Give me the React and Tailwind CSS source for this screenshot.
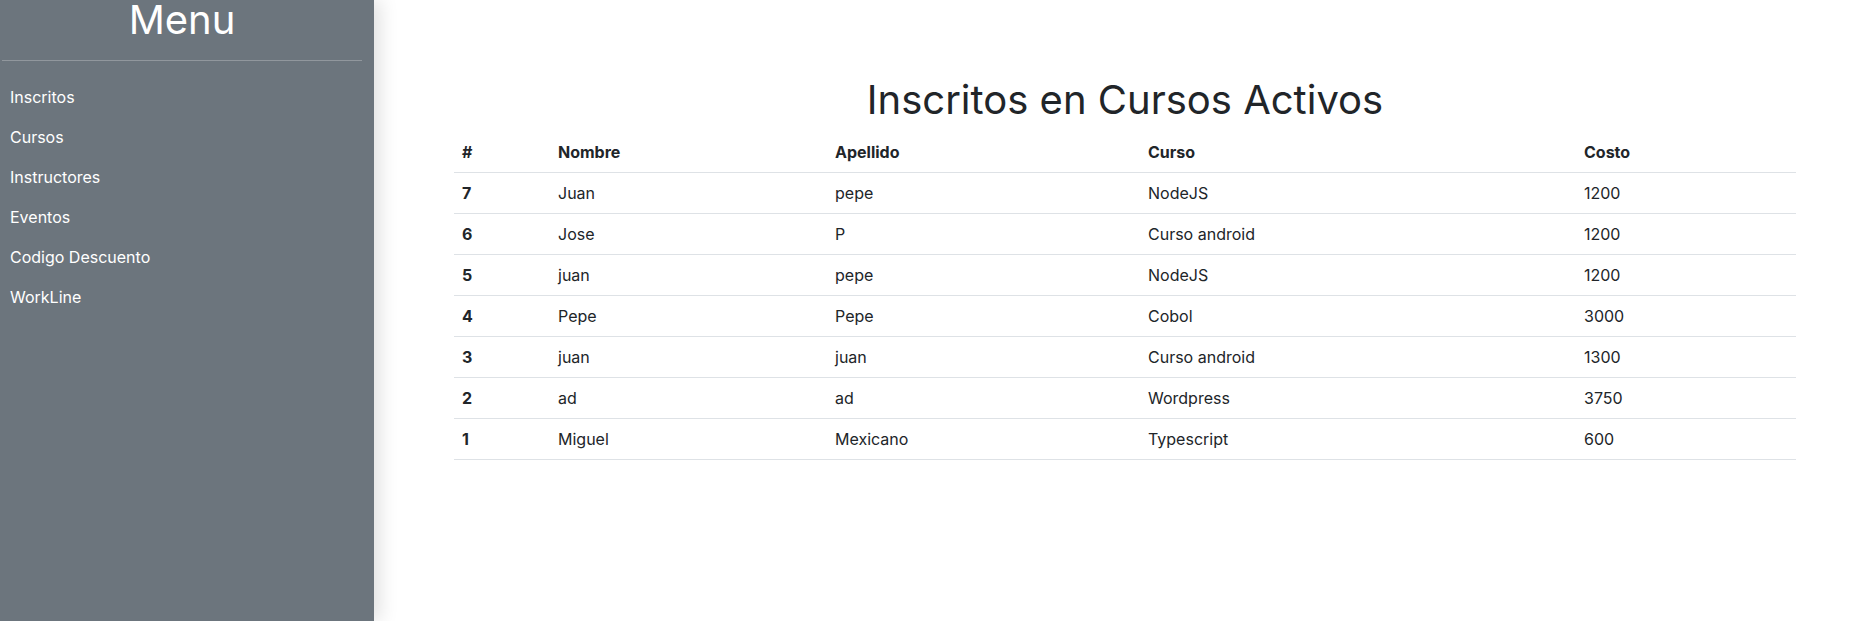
import React from 'react';

const inscritos = [
  { id: 7, nombre: 'Juan', apellido: 'pepe', curso: 'NodeJS', costo: 1200 },
  { id: 6, nombre: 'Jose', apellido: 'P', curso: 'Curso android', costo: 1200 },
  { id: 5, nombre: 'juan', apellido: 'pepe', curso: 'NodeJS', costo: 1200 },
  { id: 4, nombre: 'Pepe', apellido: 'Pepe', curso: 'Cobol', costo: 3000 },
  { id: 3, nombre: 'juan', apellido: 'juan', curso: 'Curso android', costo: 1300 },
  { id: 2, nombre: 'ad', apellido: 'ad', curso: 'Wordpress', costo: 3750 },
  { id: 1, nombre: 'Miguel', apellido: 'Mexicano', curso: 'Typescript', costo: 600 },
];

const links = ['Inscritos', 'Cursos', 'Instructores', 'Eventos', 'Codigo Descuento', 'WorkLine'];

const App = () => {
  return (
    <div className="flex h-[621px] bg-white font-['Inter',sans-serif] text-[#212529]">
      {/* Sidebar */}
      <aside className="relative z-10 w-[374px] shrink-0 bg-[#6c757d] text-white shadow-[6px_0_18px_rgba(0,0,0,0.12)]">
        <div className="ml-[2px] w-[360px]">
          <h1 className="text-center text-[40px] leading-none font-normal">Menu</h1>
          <div className="mt-[20px] h-px bg-white/25" />
        </div>
        <nav className="mt-4 flex flex-col">
          {links.map(l => (
            <a key={l} href="#" className="px-[10px] py-2 text-base leading-6 text-white">
              {l}
            </a>
          ))}
        </nav>
      </aside>

      {/* Contenido */}
      <main className="flex-1 pt-[76px] pl-[80px] pr-[68px]">
        <h2 className="text-center text-[40px] leading-[48px] font-normal text-[#212529]">
          Inscritos en Cursos Activos
        </h2>
        <table className="mt-2 w-full border-collapse text-left text-base leading-6">
          <thead>
            <tr className="border-b border-[#dee2e6]">
              <th className="w-[96px] px-2 py-2 font-bold">#</th>
              <th className="w-[277px] px-2 py-2 font-bold">Nombre</th>
              <th className="w-[313px] px-2 py-2 font-bold">Apellido</th>
              <th className="w-[436px] px-2 py-2 font-bold">Curso</th>
              <th className="px-2 py-2 font-bold">Costo</th>
            </tr>
          </thead>
          <tbody>
            {inscritos.map(i => (
              <tr key={i.id} className="border-b border-[#dee2e6]">
                <th className="px-2 py-2 font-bold">{i.id}</th>
                <td className="px-2 py-2">{i.nombre}</td>
                <td className="px-2 py-2">{i.apellido}</td>
                <td className="px-2 py-2">{i.curso}</td>
                <td className="px-2 py-2">{i.costo}</td>
              </tr>
            ))}
          </tbody>
        </table>
      </main>
    </div>
  );
};

export default App;
